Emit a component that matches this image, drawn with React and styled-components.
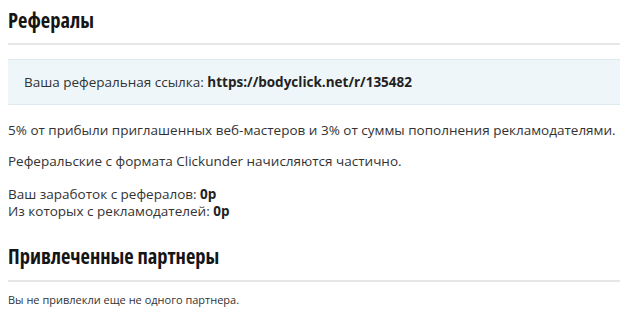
import React from "react";
import styled, { createGlobalStyle } from "styled-components";

const Global = createGlobalStyle`
  html, body { margin: 0; padding: 0; background: #fff; }
  body { font-family: "Open Sans", "Noto Sans", sans-serif; color: #333; }
`;

const Page = styled.div`
  padding: 6px 0 0 8px;
  display: flex;
  flex-direction: column;
`;

const Heading = styled.h2`
  margin: 0;
  font-family: "Open Sans", sans-serif;
  font-stretch: 75%;
  font-weight: 700;
  font-size: 20.5px;
  line-height: 28px;
  color: #151515;
  padding-bottom: ${(p) => p.$pb || 9}px;
  border-bottom: 2px solid #e6e6e6;
`;

const InfoBox = styled.div`
  margin-top: 14px;
  height: 44px;
  display: flex;
  align-items: center;
  padding-left: 16px;
  background: #eef6f9;
  border-top: 1px solid #dfeaee;
  border-bottom: 1px solid #dfeaee;
  font-size: 13.5px;
  color: #333;
`;

const Strong = styled.b`
  font-weight: 700;
  color: #222;
`;

const Para = styled.p`
  margin: ${(p) => p.$mt}px 0 0;
  font-size: 13.5px;
  line-height: 17px;
  color: #333;
  white-space: nowrap;
`;

const Small = styled.p`
  margin: 10px 0 0;
  font-size: 11px;
  line-height: 15px;
  color: #333;
`;

export default function App() {
  return (
    <>
      <Global />
      <Page>
        <Heading>Рефералы</Heading>
        <InfoBox>
          Ваша реферальная ссылка:&nbsp;<Strong>https://bodyclick.net/r/135482</Strong>
        </InfoBox>
        <Para $mt={17}>
          5% от прибыли приглашенных веб-мастеров и 3% от суммы пополнения рекламодателями.
        </Para>
        <Para $mt={14}>Реферальские с формата Clickunder начисляются частично.</Para>
        <Para $mt={16}>
          Ваш заработок с рефералов: <Strong>0р</Strong>
        </Para>
        <Para $mt={0}>
          Из которых с рекламодателей: <Strong>0р</Strong>
        </Para>
        <Heading as="h3" $pb={10} style={{ marginTop: 22 }}>
          Привлеченные партнеры
        </Heading>
        <Small>Вы не привлекли еще не одного партнера.</Small>
      </Page>
    </>
  );
}
